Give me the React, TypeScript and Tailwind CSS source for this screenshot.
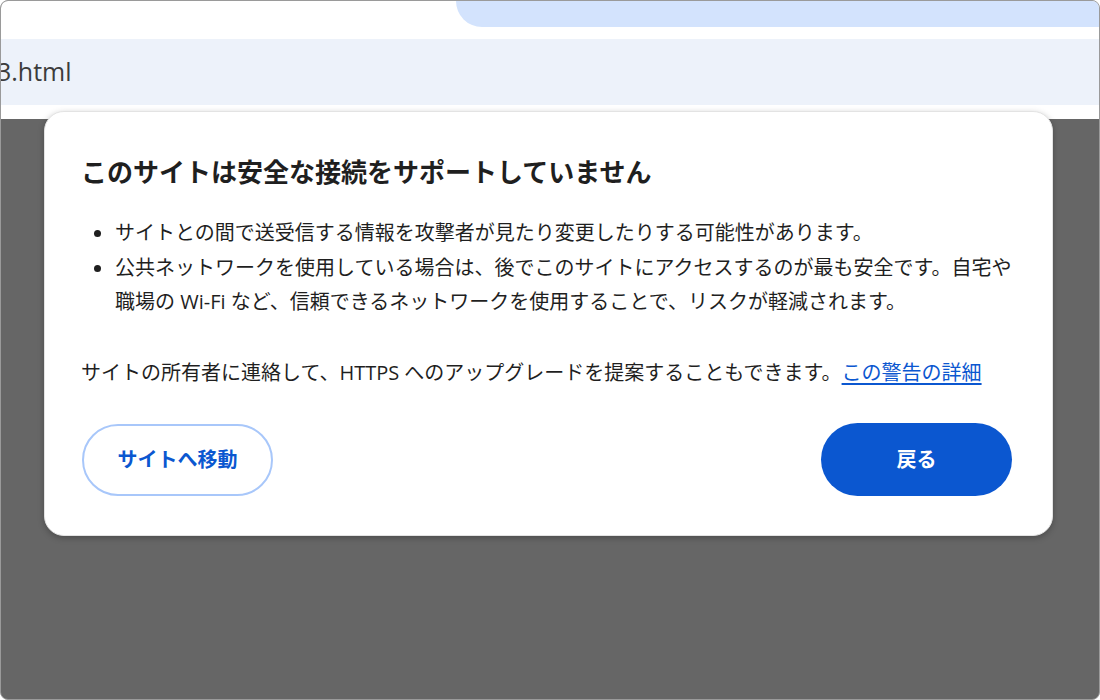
import type { ReactNode } from 'react'

const font = { fontFamily: '"Segoe UI", "Open Sans", "Noto Sans CJK JP", sans-serif' }

function Bullet({ children }: { children: ReactNode }) {
  return (
    <li className="flex">
      <span className="w-[34px] shrink-0 flex items-start pt-[14px]">
        <span className="ml-[13px] w-[7px] h-[7px] rounded-full bg-[#1f1f1f]" />
      </span>
      <span className="flex-1 whitespace-nowrap">{children}</span>
    </li>
  )
}

export default function App() {
  return (
    <div
      className="relative w-[1100px] h-[700px] rounded-[8px] border border-[#9a9a9a] overflow-hidden bg-[#666666] flex flex-col"
      style={font}
    >
      <div className="h-[38px] bg-white flex justify-end shrink-0">
        <div className="w-[643px] h-[26px] bg-[#d3e3fd] rounded-bl-[26px]" />
      </div>
      <div className="h-[66px] bg-[#edf2fa] flex items-center shrink-0">
        <span className="-ml-[4px] text-[25px] text-[#3c3c3c]">3.html</span>
      </div>
      <div className="h-[14px] bg-white shrink-0" />
      <div className="flex-1" />

      <div className="absolute left-[43px] top-[110px] w-[1009px] h-[425px] bg-white rounded-[20px] border border-[#e3e3e3] shadow-[0_2px_6px_rgba(0,0,0,0.25)] pt-[42px] pl-[36px] pr-[39px] pb-[39px] flex flex-col text-[#1f1f1f]">
        <h1 className="text-[26px] leading-[36px] font-bold whitespace-nowrap">
          このサイトは安全な接続をサポートしていません
        </h1>
        <ul className="mt-[26px] text-[20px] leading-[34.5px]">
          <Bullet>サイトとの間で送受信する情報を攻撃者が見たり変更したりする可能性があります。</Bullet>
          <Bullet>
            公共ネットワークを使用している場合は、後でこのサイトにアクセスするのが最も安全です。自宅や
            <br />
            職場の Wi-Fi など、信頼できるネットワークを使用することで、リスクが軽減されます。
          </Bullet>
        </ul>
        <p className="mt-[36px] text-[20px] leading-[34px] whitespace-nowrap">
          サイトの所有者に連絡して、HTTPS へのアップグレードを提案することもできます。
          <a href="#" className="text-[#0b57d0] underline underline-offset-[3px]">
            この警告の詳細
          </a>
        </p>
        <div className="mt-auto flex justify-between items-center">
          <button className="ml-[1px] w-[191px] h-[72px] rounded-full border-2 border-[#a8c7fa] text-[#0b57d0] text-[20px] font-bold">
            サイトへ移動
          </button>
          <button className="mr-[1px] w-[191px] h-[73px] rounded-full bg-[#0b57d0] text-white text-[20px] font-bold">
            戻る
          </button>
        </div>
      </div>
    </div>
  )
}
